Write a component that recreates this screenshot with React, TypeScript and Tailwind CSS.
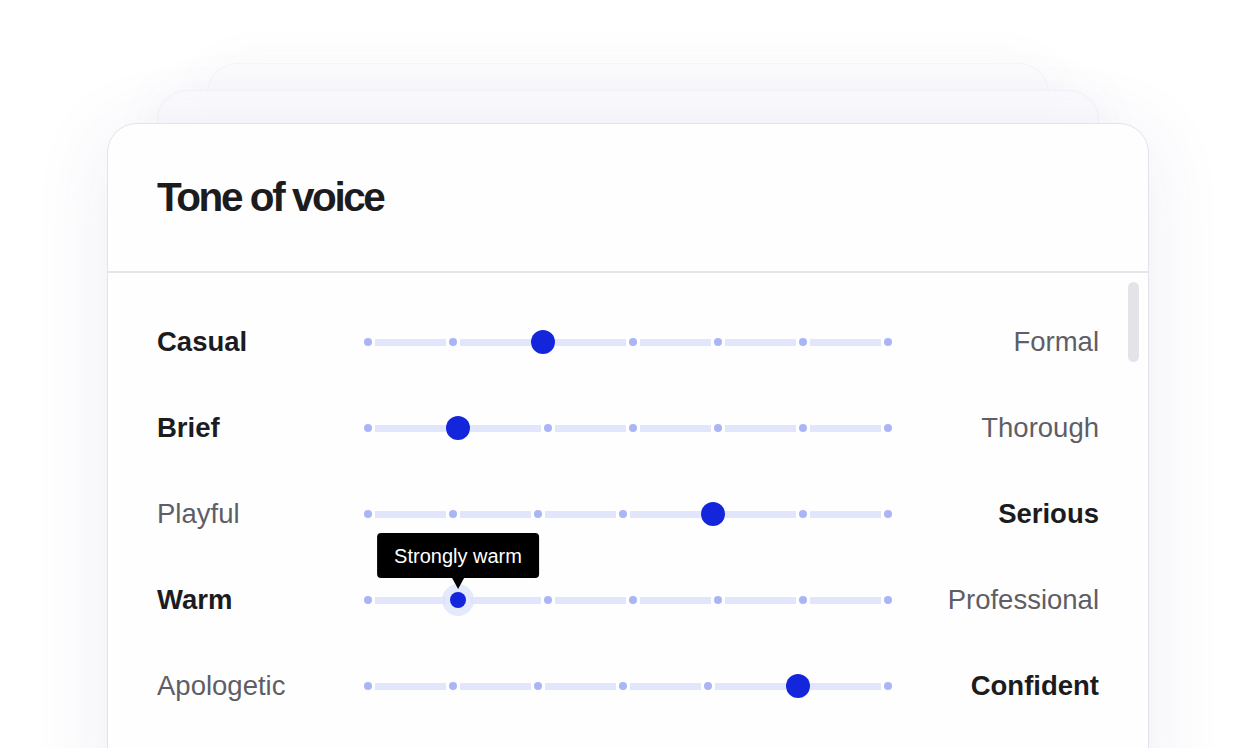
import React from 'react';

type Row = {
  left: string;
  right: string;
  value: number;
  focused?: boolean;
  tip?: string;
};

const rows: Row[] = [
  { left: 'Casual', right: 'Formal', value: 2 },
  { left: 'Brief', right: 'Thorough', value: 1 },
  { left: 'Playful', right: 'Serious', value: 4 },
  { left: 'Warm', right: 'Professional', value: 1, focused: true, tip: 'Strongly warm' },
  { left: 'Apologetic', right: 'Confident', value: 5 },
];

const STEPS = 7;

function Thumb({ focused, tip }: { focused?: boolean; tip?: string }) {
  return (
    <div className="relative w-[24px] h-[24px] -mx-[3px] shrink-0 flex items-center justify-center z-10">
      {focused ? (
        <div className="w-[32px] h-[32px] shrink-0 rounded-full bg-[#dfe4fb]/80 flex items-center justify-center">
          <div className="w-[16px] h-[16px] rounded-full bg-[#1426dc]" />
        </div>
      ) : (
        <div className="w-[24px] h-[24px] shrink-0 rounded-full bg-[#1426dc]" />
      )}
      {tip && (
        <div className="absolute bottom-[23px] left-1/2 -translate-x-1/2 flex flex-col items-center">
          <div className="h-[45px] px-[17px] flex items-center rounded-[4px] bg-black text-white text-[20px] whitespace-nowrap">
            {tip}
          </div>
          <div className="w-0 h-0 border-l-[6px] border-r-[6px] border-t-[11px] border-l-transparent border-r-transparent border-t-black" />
        </div>
      )}
    </div>
  );
}

function Slider({ value, focused, tip }: { value: number; focused?: boolean; tip?: string }) {
  const items: React.ReactNode[] = [];
  for (let i = 0; i < STEPS; i++) {
    if (i > 0) items.push(<div key={'s' + i} className="flex-1 h-[7px] bg-[#e1e6fc]" />);
    items.push(
      i === value ? (
        <Thumb key={'t' + i} focused={focused} tip={tip} />
      ) : (
        <div key={'d' + i} className="w-[8px] h-[8px] shrink-0 rounded-full bg-[#aab5f6]" />
      )
    );
  }

  return <div className="w-[528px] h-[32px] mx-[4px] shrink-0 flex items-center gap-[3px]">{items}</div>;
}

function ToneRow({ row }: { row: Row }) {
  const leftStrong = row.value < 3;
  return (
    <div className="flex items-center h-[86px]">
      <div
        className={
          'w-[203px] shrink-0 text-[27.5px] ' +
          (leftStrong ? 'font-bold text-[#1c1c1f]' : 'text-[#5e5e66]')
        }
      >
        {row.left}
      </div>
      <Slider value={row.value} focused={row.focused} tip={row.tip} />
      <div
        className={
          'flex-1 text-right text-[27.5px] ' +
          (!leftStrong ? 'font-bold text-[#1c1c1f]' : 'text-[#5e5e66]')
        }
      >
        {row.right}
      </div>
    </div>
  );
}

export default function App() {
  return (
    <div
      className="relative w-[1256px] h-[748px] overflow-hidden bg-white"
      style={{ fontFamily: '"Liberation Sans", Arial, sans-serif' }}
    >
      {/* stacked cards behind */}
      <div className="absolute left-[207px] top-[63px] w-[842px] h-[400px] rounded-[30px] border border-[#f6f5fa] bg-[#fcfcfe] shadow-[0_0_50px_rgba(90,80,150,0.04)]" />
      <div className="absolute left-[157px] top-[90px] w-[942px] h-[400px] rounded-[30px] border border-[#f5f4f9] bg-[#fcfbfe] shadow-[0_0_50px_rgba(90,80,150,0.05)]" />

      <div className="relative ml-[107px] mt-[123px] w-[1042px] h-[700px] rounded-[30px] border border-[#e4e3ea] bg-[#fefeff] shadow-[0_10px_80px_rgba(70,60,140,0.09)]">
        <div className="h-[149px] border-b-2 border-[#e6e6ea] flex items-center pl-[49px]">
          <h1 className="text-[40.5px] font-bold tracking-[-0.06em] text-[#1c1c1f]">Tone of voice</h1>
        </div>
        <div className="relative pt-[26px] pl-[49px] pr-[49px]">
          {rows.map((row) => (
            <ToneRow key={row.left} row={row} />
          ))}
          <div className="absolute right-[9px] top-[9px] w-[11px] h-[80px] rounded-full bg-[#e4e4e8]" />
        </div>
      </div>
    </div>
  );
}
